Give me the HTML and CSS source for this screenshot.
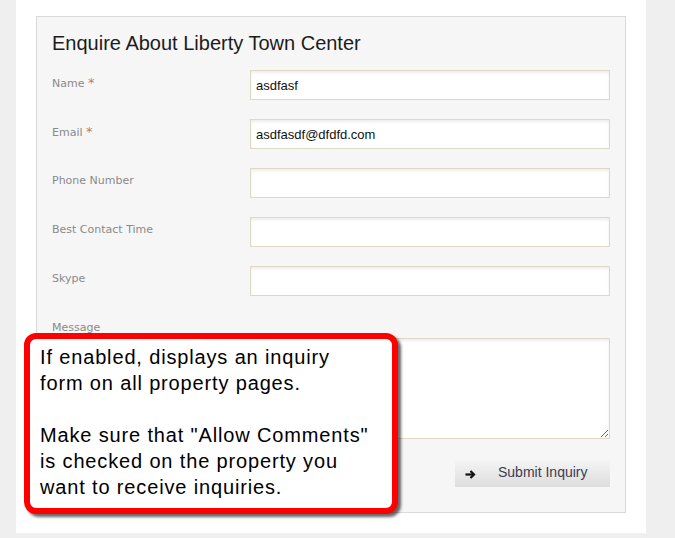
FILE: index.html
```html
<!DOCTYPE html>
<html lang="en">
<head>
<meta charset="utf-8">
<title>Enquire About Liberty Town Center</title>
<link rel="stylesheet" href="styles.css">
</head>
<body>
<div class="page">
  <form class="form-box">
    <h2 class="title">Enquire About Liberty Town Center</h2>
    <div class="fields">
      <label class="label">Name <span class="req">*</span></label>
      <input class="input" type="text" value="asdfasf">
      <label class="label">Email <span class="req">*</span></label>
      <input class="input" type="text" value="asdfasdf@dfdfd.com">
      <label class="label">Phone Number</label>
      <input class="input" type="text" value="">
      <label class="label">Best Contact Time</label>
      <input class="input" type="text" value="">
      <label class="label">Skype</label>
      <input class="input" type="text" value="">
      <label class="label">Message</label>
      <textarea class="textarea"></textarea>
    </div>
    <div class="actions">
      <button class="submit" type="button">
        <svg class="arrow" width="11" height="9" viewBox="0 0 11 9"><path d="M0.5 4.5H8.5" stroke="#111" stroke-width="2.2" fill="none"/><path d="M5.5 1L9 4.5L5.5 8" stroke="#111" stroke-width="2.2" fill="none" stroke-linejoin="miter"/></svg>
        <span class="submit-text">Submit Inquiry</span>
      </button>
    </div>
  </form>
</div>
<div class="callout">If enabled, displays an inquiry<br>form on all property pages.<br><br>Make sure that "Allow Comments"<br>is checked on the property you<br>want to receive inquiries.</div>
</body>
</html>
```
FILE: styles.css
```css
html, body {
  margin: 0;
  padding: 0;
}
body {
  background: #efefef;
  width: 675px;
  height: 538px;
  overflow: hidden;
  position: relative;
}
.page {
  margin-left: 16px;
  width: 630px;
  box-sizing: border-box;
  background: #ffffff;
  padding: 16px 20px 20px 20px;
}
.form-box {
  margin: 0;
  border: 1px solid #d9d9d9;
  background: #f6f6f6;
  padding: 14px 15px 25px 15px;
}
.title {
  margin: 0 0 15px 0;
  font-family: "Liberation Sans", Arial, sans-serif;
  font-weight: normal;
  font-size: 20px;
  line-height: 24px;
  color: #1c1c1c;
}
.fields {
  display: grid;
  grid-template-columns: 198px 360px;
  row-gap: 19px;
  align-items: start;
}
.label {
  padding-top: 6px;
  font-family: "DejaVu Sans", Verdana, sans-serif;
  font-size: 11px;
  line-height: 14px;
  color: #8a8a8a;
}
.req {
  color: #b5806c;
  font-size: 13px;
}
.input, .textarea {
  display: block;
  box-sizing: border-box;
  width: 360px;
  margin: 0;
  border: 1px solid #ddd9c6;
  background: #ffffff;
  box-shadow: inset 0 2px 3px rgba(0, 0, 0, 0.07);
  font-family: "Liberation Sans", Arial, sans-serif;
  font-size: 13px;
  color: #111;
  outline: none;
}
.input {
  height: 30px;
  padding: 0 5px;
  line-height: 28px;
}
.textarea {
  height: 101px;
  margin-top: 23px;
  padding: 5px;
}
.actions {
  display: flex;
  justify-content: flex-end;
  margin-top: 20px;
}
.submit {
  display: flex;
  align-items: center;
  box-sizing: border-box;
  width: 155px;
  height: 28px;
  padding: 0 0 0 10px;
  margin: 0;
  border: none;
  background: linear-gradient(#f5f5f5, #dddddd);
  cursor: pointer;
}
.arrow {
  display: block;
  margin-top: 2px;
}
.submit-text {
  margin-left: 22px;
  margin-bottom: 3px;
  font-family: "Liberation Sans", Arial, sans-serif;
  font-size: 14px;
  color: #3b3b50;
}
.callout {
  position: absolute;
  left: 24px;
  top: 333px;
  width: 374px;
  height: 181px;
  box-sizing: border-box;
  border: 6px solid #ff0000;
  border-radius: 12px;
  background: #ffffff;
  box-shadow: 3px 3px 3px rgba(0, 0, 0, 0.6);
  padding: 5px 0 0 10px;
  font-family: "Liberation Sans", Arial, sans-serif;
  font-size: 20px;
  letter-spacing: 0.85px;
  line-height: 26px;
  color: #000;
}
```
